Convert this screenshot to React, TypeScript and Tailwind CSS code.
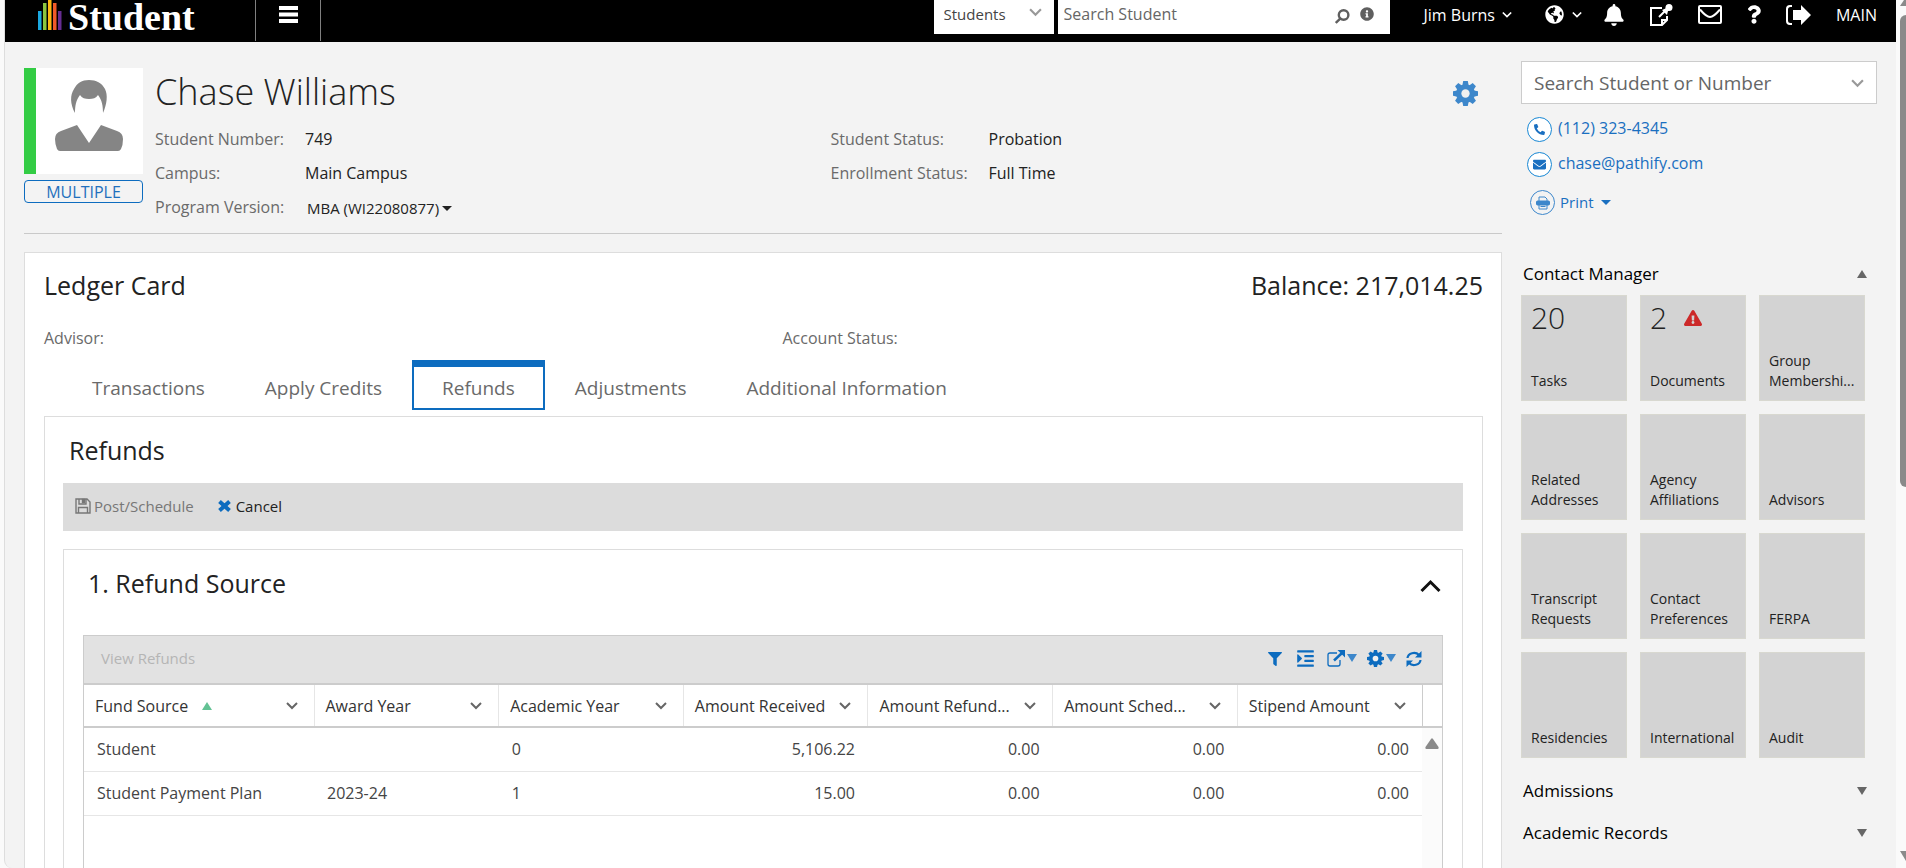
import { useState } from 'react';
import type { ReactNode } from 'react';
import { FaBell, FaEnvelope, FaExclamationTriangle, FaFilter, FaGlobeAmericas, FaIndent, FaInfoCircle, FaPhoneAlt, FaQuestion } from 'react-icons/fa';

const LOGO_BARS = [
  { x: 0, y: 11, fill: '#1ba8e0' },
  { x: 5, y: 3, fill: '#8bc53f' },
  { x: 10, y: 0, fill: '#fdb913' },
  { x: 15, y: 3, fill: '#f15a29' },
  { x: 20, y: 11, fill: '#662d91' },
];

const TABS = ['Transactions', 'Apply Credits', 'Refunds', 'Adjustments', 'Additional Information'];

const COLUMNS = ['Fund Source', 'Award Year', 'Academic Year', 'Amount Received', 'Amount Refund...', 'Amount Sched...', 'Stipend Amount'];

const ROWS = [
  ['Student', '', '0', '5,106.22', '0.00', '0.00', '0.00'],
  ['Student Payment Plan', '2023-24', '1', '15.00', '0.00', '0.00', '0.00'],
];

type Tile = { label: string; count?: number; alert?: boolean };

const TILES: Tile[] = [
  { label: 'Tasks', count: 20 },
  { label: 'Documents', count: 2, alert: true },
  { label: 'Group Membershi...' },
  { label: 'Related Addresses' },
  { label: 'Agency Affiliations' },
  { label: 'Advisors' },
  { label: 'Transcript Requests' },
  { label: 'Contact Preferences' },
  { label: 'FERPA' },
  { label: 'Residencies' },
  { label: 'International' },
  { label: 'Audit' },
];

function Chevron({ size = 12, className = '' }: { size?: number; className?: string }) {
  return (
    <svg width={size} height={size} viewBox="0 0 12 12" fill="none" stroke="currentColor" strokeWidth="2" className={`shrink-0 ${className}`}>
      <path d="M1 3l5 5 5-5" />
    </svg>
  );
}

function Caret({ up = false, className = '' }: { up?: boolean; className?: string }) {
  return (
    <svg width="10" height="8" viewBox="0 0 10 8" fill="currentColor" className={`shrink-0 ${className}`}>
      <path d={up ? 'M5 0l5 8H0z' : 'M0 0h10L5 8z'} />
    </svg>
  );
}

function Gear({ size }: { size: number }) {
  return (
    <svg width={size} height={size} viewBox="0 0 24 24" className="shrink-0">
      {[0, 45, 90, 135].map(a => (
        <path key={a} d="M9.800 0h4.400l.8 4v16l-.8 4H9.800L9 20V4z" fill="currentColor" transform={`rotate(${a} 12 12)`} />
      ))}
      <circle cx="12" cy="12" r="9" fill="currentColor" />
      <circle cx="12" cy="12" r="4" className="fill-[#f0f0f0]" />
    </svg>
  );
}

function TopBar() {
  return (
    <header className="flex h-[42px] shrink-0 items-start bg-black text-white">
      <a href="#" className="flex w-[250px] shrink-0 gap-[6px] pl-[33px]">
        <svg width="24" height="30" viewBox="0 0 24 30" className="shrink-0">
          {LOGO_BARS.map(b => <rect key={b.x} x={b.x} y={b.y} width="3.5" height={30 - b.y} fill={b.fill} />)}
        </svg>
        <span className="font-['Liberation_Serif',serif] text-[38px] leading-[34px] font-bold">Student</span>
      </a>
      <button aria-label="Menu" className="flex h-[41px] w-[66px] shrink-0 justify-center border-x border-[#808080] pt-[6px]">
        <svg width="19" height="17" viewBox="0 0 19 17" fill="currentColor">
          <path d="M0 0h19v4H0zM0 6.500h19v4H0zM0 13h19v4H0z" />
        </svg>
      </button>
      <div className="ml-auto flex shrink-0 gap-1 text-[#5f5f5f]">
        <div className="relative h-[34px] w-[120px] bg-white">
          <select aria-label="Search in" className="h-[29px] w-full appearance-none bg-transparent pl-[10px] text-[15px] text-[#444]">
            <option>Students</option>
          </select>
          <Chevron size={13} className="pointer-events-none absolute top-[6px] right-3 text-[#999]" />
        </div>
        <div className="flex h-[34px] w-[332px] items-center bg-white pr-4 pb-[6px] pl-[6px]">
          <input aria-label="Search Student" placeholder="Search Student" className="min-w-0 flex-1 text-base outline-none placeholder:text-[#666]" />
          <button aria-label="Search" className="mr-[10px] pt-1">
            <svg width="15" height="15" viewBox="0 0 15 15" fill="none" stroke="currentColor" strokeWidth="2.400">
              <circle cx="8.600" cy="6" r="4.800" />
              <path d="M5.200 9.600L.8 14" />
            </svg>
          </button>
          <FaInfoCircle size={14} />
        </div>
      </div>
      <nav className="ml-[34px] flex h-[29px] shrink-0 items-center gap-[25px] pr-[19px]">
        <button className="mr-2 flex items-center gap-[7px] text-base">Jim Burns <Chevron size={10} /></button>
        <button aria-label="Language" className="-mr-1 flex items-center gap-2"><FaGlobeAmericas size={19} /><Chevron size={10} /></button>
        <button aria-label="Notifications"><FaBell size={22} /></button>
        <button aria-label="Notes">
          <svg width="23" height="22" viewBox="0 0 23 22" fill="none" stroke="currentColor" strokeWidth="2">
            <path d="M12 4H1v17h11l5-5v-4M12 21v-5h5" />
            <path d="M9 13l6-6" />
            <path d="M12 6l5 5 1-4 3-1.500a3 3 0 0 0-4-4l-1.500 3z" fill="currentColor" stroke="none" />
            <circle cx="19" cy="3.500" r="3.500" fill="currentColor" stroke="none" />
          </svg>
        </button>
        <button aria-label="Messages">
          <svg width="24" height="19" viewBox="0 0 24 19" fill="none" stroke="currentColor" strokeWidth="2">
            <rect x="1" y="1" width="22" height="17" rx="1" />
            <path d="M2 4.500c3 3.500 7 7.500 10 7.500s7-4 10-7.500" />
          </svg>
        </button>
        <button aria-label="Help">
          <FaQuestion size={21} className="w-[14px]" />
        </button>
        <button aria-label="Sign out">
          <svg width="25" height="20" viewBox="0 0 25 20" fill="currentColor">
            <path d="M6 0v2H4.500Q2 2 2 4.500v11Q2 18 4.500 18H6v2H4Q0 20 0 16V4Q0 0 4 0z" />
            <path d="M7 5h8V0l10 10-10 10v-5H7z" />
          </svg>
        </button>
        <span className="text-base">MAIN</span>
      </nav>
    </header>
  );
}

function Field({ label, wide = false, children }: { label: string; wide?: boolean; children?: ReactNode }) {
  return (
    <div className={`flex h-[34px] items-center text-base ${wide ? 'pl-[2px]' : ''}`}>
      <dt className={`shrink-0 text-[#6a6a6a] ${wide ? 'w-[158px]' : 'w-[150px]'}`}>{label}</dt>
      <dd className="text-[#222]">{children}</dd>
    </div>
  );
}

function StudentHeader() {
  return (
    <section className="flex h-[173px] border-b border-[#c9c9c9] pt-[7px]">
      <div className="w-[119px] shrink-0">
        <div className="flex h-[106px] items-start justify-center border-l-[12px] border-[#3c4] bg-white pt-3 pr-[2px]">
          <svg width="68" height="72" viewBox="0 0 68 72" fill="#858585">
            <path d="M20 33C15 24 15 15 19 9 22 3 27 0 34 0s13 3 16 9c3 6 2 15-2 24 0-7-1-13-5-18-2 3-5 4-9 4s-7-1-9-4c-4 5-5 11-5 18z" />
            <path d="M22 45l12 18 12-18 16 6q6 2 6 8 0 6-2 10-1 2-3 2H5q-2 0-3-2-2-5-2-10 0-6 6-8z" />
          </svg>
        </div>
        <button className="mt-[6px] flex h-[23px] w-full items-center justify-center rounded border border-[#0d6cbf] text-base leading-none text-[#1f70bd]">MULTIPLE</button>
      </div>
      <div className="min-w-0 flex-1 pl-3">
        <div className="flex h-[54px] items-start justify-between pr-6">
          <h1 className="text-[36px] leading-[48px] font-light text-[#222]">Chase Williams</h1>
          <button aria-label="Settings" className="pt-[13px] text-[#3d87cb]"><Gear size={25} /></button>
        </div>
        <dl className="grid grid-cols-2">
          <Field label="Student Number:">749</Field>
          <Field label="Student Status:" wide>Probation</Field>
          <Field label="Campus:">Main Campus</Field>
          <Field label="Enrollment Status:" wide>Full Time</Field>
          <Field label="Program Version:">
            <button className="flex items-center gap-[3px] pt-[2px] pl-[2px] text-[15px]">
              MBA (WI22080877)
              <svg width="10" height="5" viewBox="0 0 10 5" fill="currentColor"><path d="M0 0h10L5 5z" /></svg>
            </button>
          </Field>
        </dl>
      </div>
    </section>
  );
}

function GridToolbar() {
  return (
    <div className="flex h-[49px] shrink-0 items-center justify-between border-b-2 border-[#ccc] bg-[#e2e2e2] pr-5 pb-[2px] pl-[17px]">
      <button disabled className="text-[15px] text-[#b5b5b5]">View Refunds</button>
      <div className="flex items-center text-[#0d6cbf]">
        <button aria-label="Filter" className="mr-[14px]"><FaFilter size={14} /></button>
        <button aria-label="Group" className="mr-3"><FaIndent size={19} /></button>
        <button aria-label="Export" className="mr-[10px] flex">
          <svg width="20" height="17" viewBox="0 0 20 17" fill="none" stroke="currentColor" strokeWidth="1.300">
            <path d="M10 3H3Q1 3 1 5v9q0 2 2 2h8q2 0 2-2v-4" />
            <path d="M7 10.500L15 3" strokeWidth="2.500" />
            <path d="M10.500 0H18v7.500z" fill="currentColor" stroke="none" />
          </svg>
          <Caret className="mt-1 text-[#3d87cb]" />
        </button>
        <button aria-label="Grid settings" className="mr-[10px] flex">
          <Gear size={17} />
          <Caret className="mt-1 ml-[2px] text-[#3d87cb]" />
        </button>
        <button aria-label="Refresh">
          <svg width="16" height="16" viewBox="0 0 16 16" fill="none" stroke="currentColor" strokeWidth="2.200">
            <path d="M1.500 7a6.500 5.500 0 0 1 11.500-3M14.500 9a6.500 5.500 0 0 1-11.500 3" />
            <path d="M15.500 0v6.500H9zM.5 16V9.500H7z" fill="currentColor" stroke="none" />
          </svg>
        </button>
      </div>
    </div>
  );
}

function RefundGrid() {
  return (
    <div className="flex min-h-0 flex-1 flex-col border border-b-0 border-[#ccc]">
      <GridToolbar />
      <table className="w-full table-fixed border-collapse text-base text-[#444]">
        <colgroup>
          <col className="w-[230px]" />
          {COLUMNS.slice(1).map(c => <col key={c} />)}
          <col className="w-5" />
        </colgroup>
        <thead>
          <tr className="h-[42px] border-b-2 border-[#ccc]">
            {COLUMNS.map((c, i) => (
              <th key={c} className={`border-r pr-4 pl-[11px] text-left font-normal text-[#333] ${i === 6 ? 'border-[#ccc]' : 'border-[#e6e6e6]'}`}>
                <div className="flex items-center">
                  <span className="whitespace-nowrap">{c}</span>
                  {i === 0 && <Caret up className="ml-[14px] text-[#63c294]" />}
                  <button aria-label={`${c} menu`} className="ml-auto"><Chevron className="text-[#666]" /></button>
                </div>
              </th>
            ))}
            <th />
          </tr>
        </thead>
        <tbody>
          {ROWS.map((row, r) => (
            <tr key={row[0]} className="h-11">
              {row.map((cell, i) => (
                <td key={COLUMNS[i]} className={`border-b border-[#e6e6e6] pr-[13px] pl-[13px] ${i > 2 ? 'text-right' : ''}`}>{cell}</td>
              ))}
              {r === 0 && (
                <td rowSpan={3} className="bg-[#fbfbfb] pt-[10px] pl-[3px] align-top">
                  <svg width="14" height="11" viewBox="0 0 14 11" fill="#8a8a8a"><path d="M6 1q1-1.500 2 0l5.500 8q.5 2-1 2h-11q-1.500 0-1-2z" /></svg>
                </td>
              )}
            </tr>
          ))}
          <tr className="h-[60px]"><td colSpan={7} /></tr>
        </tbody>
      </table>
    </div>
  );
}

function LedgerCard() {
  const [tab, setTab] = useState('Refunds');

  return (
    <section className="mt-[18px] flex min-h-0 flex-1 flex-col border border-b-0 border-[#ddd] bg-white pr-[18px] pl-[19px]">
      <div className="flex h-[66px] items-center justify-between text-[25px] text-[#222]">
        <h2>Ledger Card</h2>
        <span>Balance: 217,014.25</span>
      </div>
      <div className="grid h-[41px] grid-cols-2 pt-[7px] text-base text-[#6a6a6a]">
        <span>Advisor:</span>
        <span className="pl-[19px]">Account Status:</span>
      </div>
      <div role="tablist" className="flex h-14 shrink-0 px-[18px]">
        {TABS.map(t => (
          <button
            key={t}
            role="tab"
            aria-selected={t === tab}
            onClick={() => setTab(t)}
            className={`h-[50px] border-2 border-t-[7px] px-7 pt-[2px] text-[19px] text-[#6a6a6a] ${t === tab ? 'border-[#0d6cbf]' : 'border-transparent'}`}
          >{t}</button>
        ))}
      </div>

      <div className="flex min-h-0 flex-1 flex-col border border-b-0 border-[#ddd] pr-[19px] pl-[18px]">
        <h3 className="h-[66px] shrink-0 pl-[6px] text-[25px] leading-[66px] text-[#222]">Refunds</h3>
        <div className="flex h-12 shrink-0 items-center gap-6 bg-[#dcdcdc] px-3 pb-[2px] text-[15px]">
          <button className="flex items-center gap-[3px] text-[#777]">
            <svg width="16" height="16" viewBox="0 0 16 16" fill="none" stroke="currentColor" strokeWidth="1.400">
              <path d="M1 1h11l3 3v11H1z" />
              <path d="M3.500 15V9.500h9V15M4 1v5h7V1" />
              <path d="M7.500 1.500h2v3h-2z" fill="currentColor" />
            </svg>
            Post/Schedule
          </button>
          <button className="flex items-center gap-[5px] text-[#222]">
            <svg width="13" height="12" viewBox="0 0 13 12" fill="none" stroke="#0d6cbf" strokeWidth="4"><path d="M1.500 1.500l10 9M11.500 1.500l-10 9" /></svg>
            Cancel
          </button>
        </div>

        <div className="mt-[18px] flex min-h-0 flex-1 flex-col border border-b-0 border-[#ddd] px-[19px]">
          <div className="flex h-[85px] shrink-0 items-start justify-between pt-[15px] pr-[2px] pl-[5px]">
            <h4 className="text-[25px] leading-9 text-[#222]">1. Refund Source</h4>
            <button aria-label="Collapse" className="pt-3">
              <svg width="21" height="18" viewBox="0 0 21 18" fill="none" stroke="#111" strokeWidth="3"><path d="M1.500 14l9-9 9 9" /></svg>
            </button>
          </div>
          <RefundGrid />
        </div>
      </div>
    </section>
  );
}

function RoundIcon({ children }: { children: ReactNode }) {
  return <span className="flex size-[25px] items-center justify-center rounded-full border border-[#1787d4] bg-white">{children}</span>;
}

function Sidebar() {
  return (
    <aside className="w-[356px] shrink-0">
      <div className="flex h-[43px] items-center border border-[#ccc] bg-white px-3 pt-[2px]">
        <input aria-label="Search Student or Number" placeholder="Search Student or Number" className="min-w-0 flex-1 text-[19px] outline-none placeholder:text-[#666]" />
        <button aria-label="Show students"><Chevron size={13} className="text-[#999]" /></button>
      </div>
      <div className="flex flex-col gap-[10px] pt-[13px] pl-[6px] text-base text-[#1a6fc0]">
        <a href="tel:1123234345" className="flex h-[25px] items-center gap-[6px]">
          <RoundIcon><FaPhoneAlt size={11} className="-scale-x-100 rotate-90" /></RoundIcon>
          <span className="pb-[3px]">(112) 323-4345</span>
        </a>
        <a href="mailto:chase@pathify.com" className="flex h-[25px] items-center gap-[6px]">
          <RoundIcon><FaEnvelope size={13} /></RoundIcon>
          <span className="pb-[3px]">chase@pathify.com</span>
        </a>
        <button className="mt-[3px] ml-[3px] flex h-[25px] items-center gap-[5px] text-[15px]">
          <span className="flex size-[25px] items-center justify-center rounded-full border border-[#3d87cb]">
            <svg width="14" height="14" viewBox="0 0 14 14" fill="none" stroke="#3d87cb">
              <path d="M3 5V1h6l2 2v2M3 9v4h8V9M4.500 10.500h5" />
              <rect x=".5" y="5" width="13" height="4" rx="1" fill="#3d87cb" />
            </svg>
          </span>
          Print
          <svg width="10" height="5" viewBox="0 0 10 5" fill="currentColor" className="ml-[2px]"><path d="M0 0h10L5 5z" /></svg>
        </button>
      </div>

      <button className="mt-[37px] flex h-[43px] w-full items-center justify-between pr-[10px] pl-[2px] text-[17px] text-black">
        Contact Manager <Caret up className="text-[#666]" />
      </button>
      <div className="grid grid-cols-3 gap-[13px] pr-3">
        {TILES.map(t => (
          <button key={t.label} className="flex h-[106px] flex-col justify-between border border-[#d8d8d0] bg-[#d3d3d3] px-[9px] pb-[9px] text-left text-[#222]">
            <span className="flex h-[43px] items-center gap-[17px] text-[30px] font-light">
              {t.count}
              {t.alert && <FaExclamationTriangle size={18} className="text-[#cc2929]" />}
            </span>
            <span className="w-full text-sm leading-5">{t.label}</span>
          </button>
        ))}
      </div>
      <div className="pt-3">
        {['Admissions', 'Academic Records'].map(s => (
          <button key={s} className="flex h-[42px] w-full items-center justify-between pr-[10px] pl-[2px] text-[17px] text-black">
            {s} <Caret className="text-[#666]" />
          </button>
        ))}
      </div>
    </aside>
  );
}

export default function App() {
  return (
    <div className="flex h-screen overflow-hidden bg-[#fafafa] pl-1 font-['Open_Sans',sans-serif]">
      <div className="flex min-w-0 flex-1 flex-col overflow-hidden rounded-bl-lg border-l border-[#ddd] bg-[#f3f3f3]">
        <TopBar />
        <div className="flex min-h-0 flex-1 gap-[19px] px-[19px] pt-[19px]">
          <main className="flex min-w-0 flex-1 flex-col">
            <StudentHeader />
            <LedgerCard />
          </main>
          <Sidebar />
        </div>
      </div>
      {/* Page scrollbar */}
      <div className="flex w-[10px] shrink-0 flex-col overflow-hidden pl-1 text-[#8a8a8a]">
        <svg width="14" height="6" viewBox="0 0 14 6" fill="currentColor" className="shrink-0"><path d="M4 0h6l4 6H0z" /></svg>
        <div className="mt-[9px] h-[472px] w-3 rounded-full bg-current" />
        <svg width="14" height="11" viewBox="0 0 14 11" fill="currentColor" className="mt-auto mb-[6px] shrink-0"><path d="M0 0h14L8 10q-1 1-2 0z" /></svg>
      </div>
    </div>
  );
}
